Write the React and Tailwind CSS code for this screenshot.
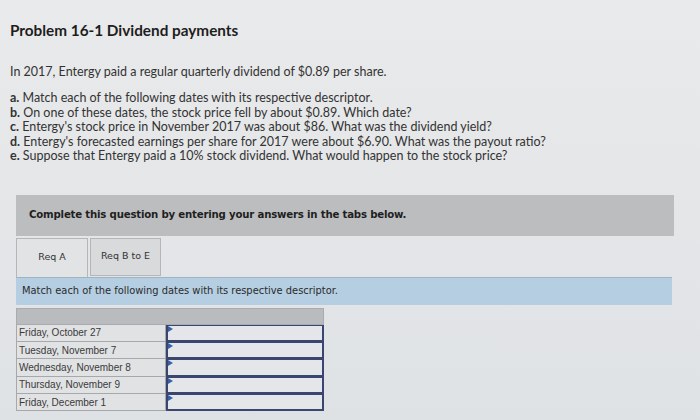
const items = [
  ['a.', 'Match each of the following dates with its respective descriptor.'],
  ['b.', 'On one of these dates, the stock price fell by about $0.89. Which date?'],
  ['c.', "Entergy's stock price in November 2017 was about $86. What was the dividend yield?"],
  ['d.', "Entergy's forecasted earnings per share for 2017 were about $6.90. What was the payout ratio?"],
  ['e.', 'Suppose that Entergy paid a 10% stock dividend. What would happen to the stock price?'],
];

const dates = ['Friday, October 27', 'Tuesday, November 7', 'Wednesday, November 8', 'Thursday, November 9', 'Friday, December 1'];

export default function App() {
  return (
    <div className="h-[420px] w-[700px] overflow-hidden bg-gradient-to-b from-[#e9eaeb] to-[#dfe2e5] text-[#262626]">
      <div className="pl-[10px] pt-[20px] font-['Lato',sans-serif]">
        <h1 className="text-[15.3px] font-bold leading-[20px] text-[#1e1e1e]">Problem 16-1 Dividend payments</h1>
        <p className="mt-[24px] text-[12.5px] leading-[16px] text-[#333]">In 2017, Entergy paid a regular quarterly dividend of $0.89 per share.</p>
        <div className="mt-[11px] text-[12.5px] leading-[14.5px] text-[#333]">
          {items.map(([k, t]) => (
            <p key={k}>
              <span className="font-bold">{k}</span> {t}
            </p>
          ))}
        </div>
      </div>

      <div className="ml-[16px] mt-[31px] w-[658px]">
        <div className="flex h-[41px] items-center bg-[#bcbdbe] pl-[13px] font-['DejaVu_Sans',sans-serif] text-[10.2px] font-bold tracking-[-0.2px] text-[#1f1f1f]">
          Complete this question by entering your answers in the tabs below.
        </div>

        <div className="mt-[2px] flex gap-[2px] font-['DejaVu_Sans',sans-serif] text-[9.5px] text-[#333]">
          <div className="flex h-[39px] w-[72px] items-center justify-center border border-b-0 border-[#b5b6b8] bg-[#e2e3e5]">Req A</div>
          <div className="flex h-[38px] w-[71px] items-center justify-center border border-[#b5b6b8] bg-[#d9dadc]">Req B to E</div>
        </div>

        <div className="flex h-[28px] w-[656px] items-center border-t border-[#9fb3c4] bg-[#b5cee2] pl-[6px] font-['DejaVu_Sans',sans-serif] text-[9.9px] text-[#2b2b2b]">
          Match each of the following dates with its respective descriptor.
        </div>

        <div className="mt-[3px] w-[308px] font-['Liberation_Sans',sans-serif] text-[10px] text-[#3a3a3a]">
          <div className="h-[17px] border border-[#a9abad] bg-[#b9bbbe]"></div>
          {dates.map((d) => (
            <div key={d} className="flex h-[17.4px]">
              <div className="flex w-[150px] items-center border-x border-b border-[#a6a8aa] bg-[#e1e2e4] pl-[2px]">{d}</div>
              <div className="relative flex-1 border-2 border-t-[1.5px] border-[#3b4670] bg-[#e4e6e9]">
                <span className="absolute left-0 top-0 h-0 w-0 border-y-[3px] border-l-[5px] border-y-transparent border-l-[#3561a8]"></span>
              </div>
            </div>
          ))}
        </div>
      </div>
    </div>
  );
}
